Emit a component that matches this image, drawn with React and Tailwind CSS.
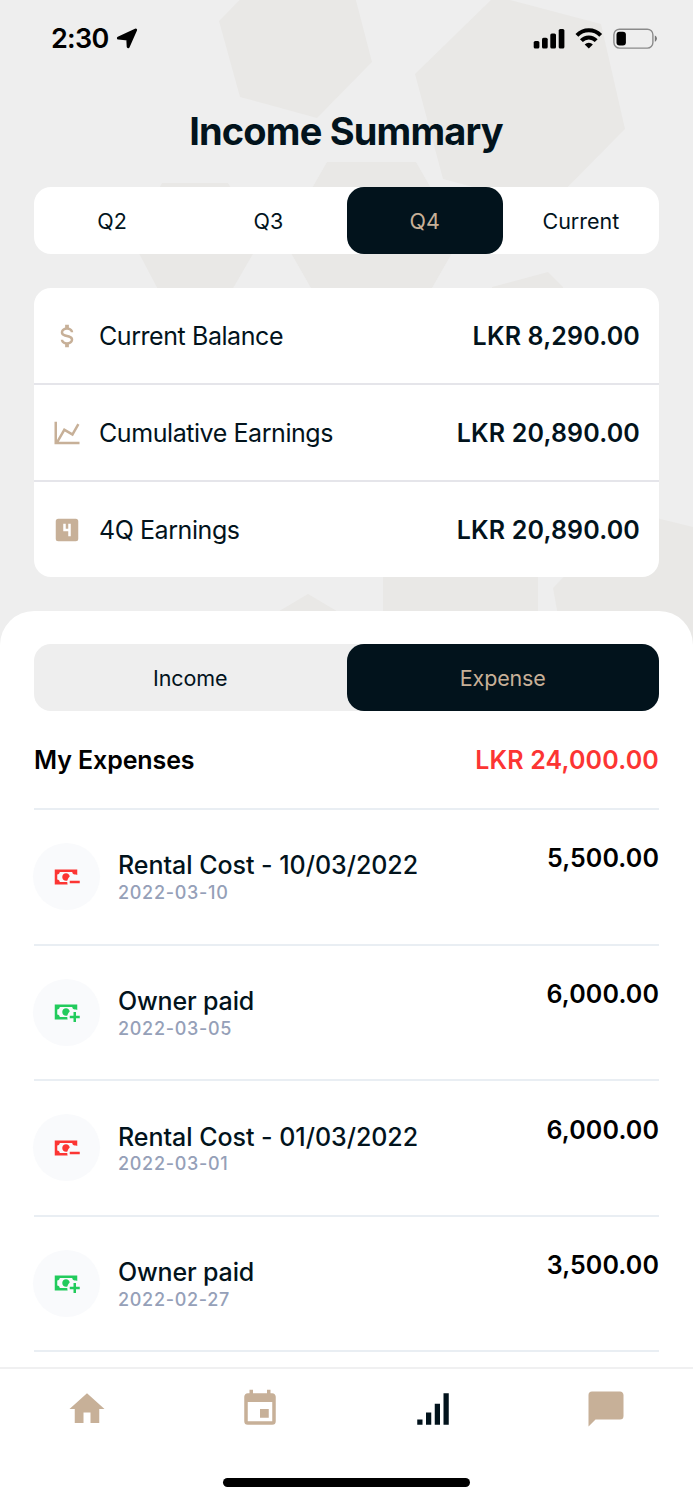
import React from "react";

function Icon({ d, className }) {
  return (
    <svg viewBox="0 0 24 24" className={className} fill="currentColor" aria-hidden="true">
      <path d={d} />
    </svg>
  );
}

const PATHS = {
  usd: "M7,15H9C9,16.08 10.37,17 12,17C13.63,17 15,16.08 15,15C15,13.9 13.96,13.5 11.76,12.97C9.64,12.44 7,11.78 7,9C7,7.21 8.47,5.69 10.5,5.18V3H13.5V5.18C15.53,5.69 17,7.21 17,9H15C15,7.92 13.63,7 12,7C10.37,7 9,7.92 9,9C9,10.1 10.04,10.5 12.24,11.03C14.36,11.56 17,12.22 17,15C17,16.79 15.53,18.31 13.5,18.82V21H10.5V18.82C8.47,18.31 7,16.79 7,15Z",
  chart: "M16,11.78L20.24,4.45L21.97,5.45L16.74,14.5L10.23,10.75L5.46,19H22V21H2V3H4V17.54L9.5,8L16,11.78Z",
  four: "M19,3A2,2 0 0,1 21,5V19A2,2 0 0,1 19,21H5A2,2 0 0,1 3,19V5A2,2 0 0,1 5,3H19M9,7V13H13V17H15V7H13V11H11V7H9Z",
  minus: "M15 15V17H23V15M14.97 11.61C14.85 10.28 13.59 8.97 12 9C10.3 9.03 9 10.3 9 12C9 13.7 10.3 14.94 12 15C12.38 15 12.77 14.92 13.14 14.77C13.41 13.67 13.86 12.63 14.97 11.61M13 16H7C7 14.9 6.11 14 5 14V10C6.11 10 7 9.11 7 8H17C17 9.11 17.9 10 19 10V10.06C19.67 10.06 20.34 10.18 21 10.4V6H3V18H13.32C13.1 17.33 13 16.66 13 16Z",
  plus: "M15 15V17H18V20H20V17H23V15H20V12H18V15M14.97 11.61C14.85 10.28 13.59 8.97 12 9C10.3 9.03 9 10.3 9 12C9 13.7 10.3 14.94 12 15C12.38 15 12.77 14.92 13.14 14.77C13.41 13.67 13.86 12.63 14.97 11.61M13 16H7C7 14.9 6.11 14 5 14V10C6.11 10 7 9.11 7 8H17C17 9.11 17.9 10 19 10V10.06C19.67 10.06 20.34 10.18 21 10.4V6H3V18H13.32C13.1 17.33 13 16.66 13 16Z",
  home: "M10,20V14H14V20H19V12H22L12,3L2,12H5V20H10Z",
  calendar: "M19,19H5V8H19M16,1V3H8V1H6V3H5C3.89,3 3,3.89 3,5V19A2,2 0 0,0 5,21H19A2,2 0 0,0 21,19V5C21,3.89 20.1,3 19,3H18V1M17,12H12V17H17V12Z",
  signal: "M3,21H6V18H3M8,21H11V14H8M13,21H16V9H13M18,21H21V3H18V21Z",
  message: "M20,2H4A2,2 0 0,0 2,4V22L6,18H20A2,2 0 0,0 22,16V4C22,2.89 21.1,2 20,2Z",
};

function Backdrop() {
  return (
    <svg className="absolute inset-0" width="693" height="660" viewBox="0 0 693 660" fill="#e9e8e6" aria-hidden="true">
      <path d="M219 21L240 97L317 118L372 62L352 -15L275 -36Z" />
      <path d="M415 74L443 179L548 207L625 129L601 24L495 -4Z" />
      <path d="M162 183H228L261 240L228 297H162L132 240Z" />
      <path d="M327 162H416L460 239L416 316H327L283 239Z" />
      <path d="M492 287L548 272L563 287V300H492Z" />
      <path d="M308 594L340 613V640H276V613Z" />
      <path d="M383 570H538V640H383Z" />
      <path d="M640 514L693 527V660H566L553 588L600 540Z" />
    </svg>
  );
}

function StatusBar() {
  return (
    <div className="flex h-[76px] items-center justify-between pl-[51px] pr-9 pt-px">
      <div className="flex items-center gap-[7px]">
        <span className="text-[27px] font-semibold leading-8 tracking-[-0.7px] text-black">2:30</span>
        <svg width="22" height="22" viewBox="0 0 22 22" aria-hidden="true">
          <path
            d="M19.6 2L12.2 18.7L11.8 10.9L2.4 10.1Z"
            stroke="#000"
            strokeWidth="3"
            strokeLinejoin="round"
          />
        </svg>
      </div>
      <svg width="124" height="22" viewBox="0 0 124 22" aria-hidden="true">
        <rect x="0.7" y="13" width="5.7" height="7.6" rx="1.6" />
        <rect x="9" y="9.7" width="5.7" height="10.9" rx="1.6" />
        <rect x="17.3" y="5.4" width="5.7" height="15.2" rx="1.6" />
        <rect x="25.7" y="1" width="5.7" height="19.6" rx="1.6" />
        <g fill="none" stroke="#000" strokeWidth="4">
          <path d="M43.9 7.4A16.6 16.6 0 0 1 67.7 7.4" />
          <path d="M48.4 12.6A10.2 10.2 0 0 1 63.2 12.6" />
        </g>
        <path d="M55.8 20.6L51.7 16.5A5.8 5.8 0 0 1 59.9 16.5Z" />
        <rect x="80.9" y="1.2" width="39" height="18.9" rx="5.6" fill="none" stroke="#000" strokeOpacity="0.42" strokeWidth="1.4" />
        <rect x="83.5" y="3.8" width="9.4" height="13.8" rx="3" />
        <path d="M121.8 7.4C124.6 8.6 124.6 12.6 121.8 13.8Z" opacity="0.5" />
      </svg>
    </div>
  );
}

function Tab({ label, active = false, className = "" }) {
  return (
    <div
      className={`flex h-[67px] flex-1 basis-0 items-center justify-center rounded-[17px] pt-px text-[21.5px] ${className} ${
        active ? "bg-[#02131c] text-[#c7b098]" : "text-[#02131c]"
      }`}
    >
      {label}
    </div>
  );
}

const stats = [
  { icon: PATHS.usd, label: "Current Balance", value: "LKR 8,290.00" },
  { icon: PATHS.chart, label: "Cumulative Earnings", value: "LKR 20,890.00" },
  { icon: PATHS.four, label: "4Q Earnings", value: "LKR 20,890.00" },
];

const expenses = [
  { title: "Rental Cost - 10/03/2022", date: "2022-03-10", amount: "5,500.00", paid: false },
  { title: "Owner paid", date: "2022-03-05", amount: "6,000.00", paid: true },
  { title: "Rental Cost - 01/03/2022", date: "2022-03-01", amount: "6,000.00", paid: false },
  { title: "Owner paid", date: "2022-02-27", amount: "3,500.00", paid: true },
];

export default function App() {
  return (
    <div className="relative flex h-[1500px] w-[693px] flex-col overflow-hidden bg-[#eeeeee] font-['Inter',sans-serif] text-[#02131c]">
      <Backdrop />
      <div className="relative flex flex-1 flex-col">
        <StatusBar />
        <h1 className="mt-[31px] pr-px text-center text-[38px] font-bold leading-[48px] tracking-[-0.82px]">Income Summary</h1>

        <div className="mx-[34px] mt-8 flex rounded-[17px] bg-white">
          <Tab label="Q2" />
          <Tab label="Q3" />
          <Tab label="Q4" active />
          <Tab label="Current" />
        </div>

        <div className="mx-[34px] mt-[34px] h-[289px] rounded-[17px] bg-white">
          {stats.map((s, i) => (
            <div
              key={s.label}
              className={`flex items-center pl-[18px] pr-[19px] ${
                i < 2 ? "h-[97px] border-b-2 border-[#e5e5ea]" : "h-[95px]"
              }`}
            >
              <Icon d={s.icon} className="size-[30px] text-[#c7b098]" />
              <span className="ml-[17px] flex-1 text-[25px] leading-9 tracking-[-0.43px]">{s.label}</span>
              <span className="text-[25px] font-semibold leading-9 tracking-[0.17px]">{s.value}</span>
            </div>
          ))}
        </div>

        <section className="mt-[34px] flex flex-1 flex-col rounded-t-[34px] bg-white px-[34px] pt-[33px]">
          <div className="flex rounded-[17px] bg-[#eeeeee]">
            <Tab label="Income" className="tracking-[-0.1px]" />
            <Tab label="Expense" active className="tracking-[-0.15px]" />
          </div>
          <div className="flex h-[99px] items-center justify-between border-b-2 border-[#e9eef3] text-[25px] font-semibold leading-9 text-black">
            <span className="tracking-[-0.1px]">My Expenses</span>
            <span className="tracking-[0.17px] text-[#fc3533]">LKR 24,000.00</span>
          </div>
          {expenses.map((e) => (
            <div key={e.date} className="flex h-[135.6px] border-b-2 border-[#e9eef3] pt-[33px]">
              <div className="-ml-[0.6px] flex size-[67px] items-center justify-center rounded-full bg-[#f9fafc]">
                <Icon
                  d={e.paid ? PATHS.plus : PATHS.minus}
                  className={`mr-px size-[30px] ${e.paid ? "text-[#22cb5c]" : "text-[#fc3533]"}`}
                />
              </div>
              <div className="ml-[17.6px] flex-1 pt-[7.4px]">
                <div className={`text-[25px] font-medium leading-[31px] ${e.paid ? "tracking-[-0.15px]" : "tracking-[-0.03px]"}`}>
                  {e.title}
                </div>
                <div className="pt-[1.6px] text-[18px] font-medium leading-5 tracking-[0.7px] text-[#95a0b8]">{e.date}</div>
              </div>
              <div className="pt-[0.4px] text-[25px] font-semibold leading-[31px] tracking-[0.12px] text-black">{e.amount}</div>
            </div>
          ))}
        </section>
      </div>

      <nav className="relative flex h-[133px] shrink-0 flex-col border-t-2 border-[#f0f0f1] bg-white">
        <div className="flex h-20 pr-px">
          {["home", "calendar", "signal", "message"].map((k) => (
            <div key={k} className="flex flex-1 items-center justify-center">
              <Icon d={PATHS[k]} className={`size-[42px] ${k === "signal" ? "text-[#02131c]" : "text-[#c7b098]"}`} />
            </div>
          ))}
        </div>
        <div className="mx-auto mt-[29px] h-[8.5px] w-[247px] rounded-full bg-black" />
      </nav>
    </div>
  );
}
